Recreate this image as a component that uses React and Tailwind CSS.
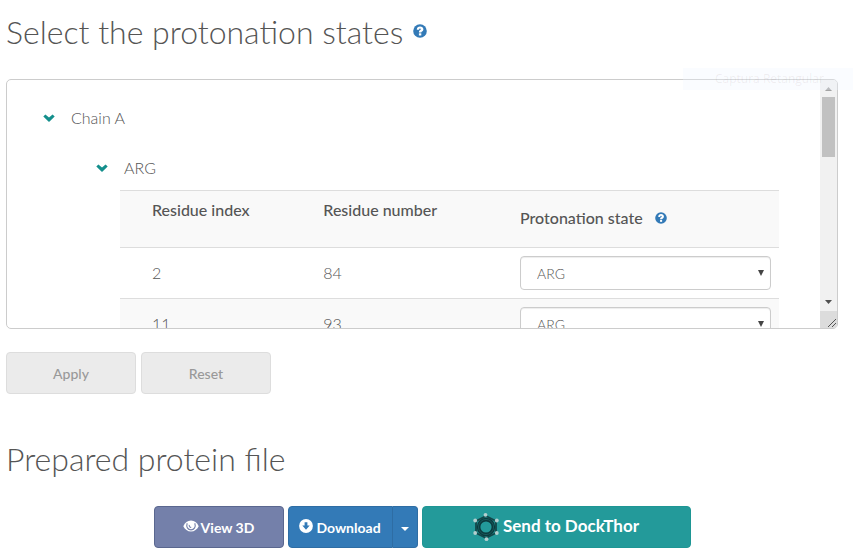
import React from "react";

const rows = [
  { index: 2, number: 84, state: "ARG" },
  { index: 11, number: 93, state: "ARG" },
];

function HelpIcon({ className }) {
  return (
    <svg viewBox="0 0 14 14" className={className} aria-hidden="true">
      <circle cx="7" cy="7" r="6.8" fill="#337ab7" />
      <path
        d="M3.800 5.700C3.800 3.500 5.200 2.400 7.100 2.400c1.900 0 3.300 1.100 3.300 2.800 0 1.300-.7 1.900-1.400 2.400-.5.400-.7.500-.7.900H5.900c0-1.400.5-1.900 1.200-2.400.5-.3.700-.5.700-.9s-.3-.7-.8-.7c-.6 0-.9.400-.9 1.200z"
        fill="#fff"
      />
      <rect x="5.900" y="9.300" width="2.400" height="2.200" fill="#fff" />
    </svg>
  );
}

function ChevronIcon() {
  return (
    <svg viewBox="0 0 12 8" className="h-2 w-3 shrink-0" aria-hidden="true">
      <path d="M0.300 2.600 L2.400 0.500 L6 3.500 L9.600 0.500 L11.700 2.600 L6 7.900 Z" fill="#148f8c" />
    </svg>
  );
}

function EyeIcon() {
  return (
    <svg viewBox="0 0 16 12" className="mb-[2px] h-3 w-4 shrink-0" aria-hidden="true">
      <path d="M.3 6.200C1.900 2.800 4.600.5 8 .5s6.100 2.300 7.700 5.700C14.100 9.400 11.400 11.500 8 11.500S1.900 9.400.3 6.200Z" fill="#fff" />
      <path d="M4.200 3.200C2.900 6.700 4.800 9.900 8 9.900s5.100-3.200 3.800-6.700" fill="none" stroke="#7480aa" strokeWidth="1.100" />
      <path d="M6.200 4.900C6.100 6.700 7 7.500 8.200 7.400" fill="none" stroke="#7480aa" strokeWidth="1.100" />
    </svg>
  );
}

function DownloadIcon() {
  return (
    <svg viewBox="0 0 14 14" className="mb-[2px] size-[14px] shrink-0" aria-hidden="true">
      <circle cx="7" cy="7" r="6.900" fill="#fff" />
      <path d="M5.600 3.200h2.800v3.300h2.300L7 10.800 3.300 6.500h2.300z" fill="#337ab7" />
    </svg>
  );
}

function MoleculeIcon() {
  return (
    <svg viewBox="0 0 26 30" className="h-[30px] w-[26px] shrink-0" aria-hidden="true">
      <path d="M13 4 L23 9 V21 L13 26 L3 21 V9 Z" fill="#1f8a8a" stroke="#12474a" strokeWidth="1.800" />
      <circle cx="13" cy="15" r="7.400" fill="#239a9a" stroke="#0b3a3d" strokeWidth="3.600" />
      <circle cx="13" cy="15" r="7.600" fill="none" stroke="#17595c" strokeWidth="1" />
      <g fill="#b4cfcf">
        <circle cx="12.500" cy="2.800" r="1.900" />
        <circle cx="23.800" cy="8.500" r="1.900" />
        <circle cx="23.800" cy="21" r="1.900" />
        <circle cx="13.500" cy="27.200" r="1.900" />
        <circle cx="2.200" cy="21" r="1.900" />
        <circle cx="2.200" cy="8.500" r="1.900" />
      </g>
    </svg>
  );
}

function StateSelect({ row }) {
  return (
    <div className="grid items-center">
      <select
        aria-label={`Protonation state of residue ${row.number}`}
        defaultValue={row.state}
        className="col-start-1 row-start-1 h-[34px] w-full appearance-none rounded border border-[#ccc] bg-white px-4 text-[14px] font-light text-[#555] shadow-[inset_0_1px_1px_rgba(0,0,0,0.075)]"
      >
        <option>{row.state}</option>
      </select>
      <svg viewBox="0 0 6 6" className="pointer-events-none col-start-1 row-start-1 mr-[7px] size-[6px] justify-self-end" aria-hidden="true">
        <path d="M0 0h6L3 6z" fill="#444" />
      </svg>
    </div>
  );
}

function ScrollBar() {
  return (
    <div className="flex w-[17px] shrink-0 flex-col bg-[#f1f1f1]" aria-hidden="true">
      <svg viewBox="0 0 17 17" className="size-[17px]">
        <path d="M5 11h7L8.500 7z" fill="#a3a3a3" />
      </svg>
      <div className="mx-[2px] h-[60px] bg-[#c1c1c1]" />
      <div className="flex-1" />
      <svg viewBox="0 0 17 17" className="size-[17px]">
        <path d="M5 6h7L8.500 10z" fill="#505050" />
      </svg>
      <svg viewBox="0 0 17 17" className="size-[17px] bg-[#dcdcdc]">
        <path d="M8 16L16 8M12 16L16 12" stroke="#555" strokeWidth="1" fill="none" />
      </svg>
    </div>
  );
}

export default function App() {
  return (
    <main className="relative overflow-hidden bg-white pr-[15px] pl-[6px] font-['Lato','Noto_Sans',sans-serif] text-base font-light text-[#555]">
      <header className="flex items-start gap-[10px] pt-3">
        <h1 className="text-[32px] leading-10 text-[#555]">Select the protonation states</h1>
        <button type="button" aria-label="Help on protonation states" className="pt-3">
          <HelpIcon className="size-[14px]" />
        </button>
      </header>

      <section aria-label="Protonation states" className="mt-[27px] flex h-[250px] overflow-hidden rounded-[5px] border border-[#ccc]">
        <div className="min-w-0 flex-1 overflow-hidden pr-[41px] pl-9">
          <button type="button" className="mt-[23px] flex h-[30px] items-center gap-4">
            <ChevronIcon />
            Chain A
          </button>
          <div className="pl-[53px]">
            <button type="button" className="mt-5 flex h-[30px] items-center gap-4">
              <ChevronIcon />
              ARG
            </button>
          </div>
          <div className="mt-[7px] pl-[77px]">
            <table className="w-full table-fixed border-collapse text-left">
              <thead>
                <tr className="h-[57px] border-t border-[#ddd] bg-[#f9f9f9] align-top">
                  <th className="w-[26%] pt-[7px] pl-8 font-medium">Residue index</th>
                  <th className="pt-[7px] pl-8 font-medium">Residue number</th>
                  <th className="w-[267px] px-2 pt-[15px] font-medium">
                    <span className="flex items-center gap-3">
                      Protonation state
                      <button type="button" aria-label="Help on protonation state">
                        <HelpIcon className="size-3" />
                      </button>
                    </span>
                  </th>
                </tr>
              </thead>
              <tbody>
                {rows.map((row) => (
                  <tr key={row.index} className="h-[51px] border-t border-[#ddd] even:bg-[#f9f9f9]">
                    <td className="pl-8">{row.index}</td>
                    <td className="pl-8">{row.number}</td>
                    <td className="p-2">
                      <StateSelect row={row} />
                    </td>
                  </tr>
                ))}
              </tbody>
            </table>
          </div>
        </div>
        <ScrollBar />
      </section>

      <div className="mt-[23px] flex gap-[5px] text-[14px] font-medium text-[#999]">
        <button type="button" disabled className="h-[42px] w-[130px] rounded border border-[#ddd] bg-[#ebebeb]">Apply</button>
        <button type="button" disabled className="h-[42px] w-[130px] rounded border border-[#ddd] bg-[#ebebeb]">Reset</button>
      </div>

      <h2 className="mt-[45px] text-[32px] leading-10 text-[#555]">Prepared protein file</h2>

      <div className="mt-[27px] flex justify-center gap-1 pb-[10px] text-[14px] font-bold text-white">
        <button type="button" className="flex h-[42px] w-[130px] items-center justify-center gap-[2px] rounded border border-[#5a678f] bg-[#7480aa]">
          <EyeIcon />
          View 3D
        </button>
        <div className="flex h-[42px] w-[130px]">
          <button type="button" className="flex flex-1 items-center justify-center gap-[3px] rounded-l border border-[#2e6da4] bg-[#337ab7]">
            <DownloadIcon />
            Download
          </button>
          <button type="button" aria-label="More download formats" className="flex w-[25px] items-center justify-center rounded-r border border-l-0 border-[#2e6da4] bg-[#337ab7]">
            <svg viewBox="0 0 8 4" className="mt-1 h-1 w-2" aria-hidden="true">
              <path d="M0 0h8L4 4z" fill="#fff" />
            </svg>
          </button>
        </div>
        <button type="button" className="flex h-[42px] w-[269px] items-center justify-center gap-1 rounded border border-[#1e9694] bg-[#239a9a] text-[17px]">
          <MoleculeIcon />
          <span className="pb-[2px]">Send to DockThor</span>
        </button>
      </div>

      <div className="pointer-events-none absolute top-[68px] right-0 h-[22px] w-[170px] bg-[#f0f6ff]/30 pl-8 font-['Open_Sans',sans-serif] text-[12px] leading-[22px] font-normal text-[#806060]/10">
        Captura Retangular
      </div>
    </main>
  );
}
